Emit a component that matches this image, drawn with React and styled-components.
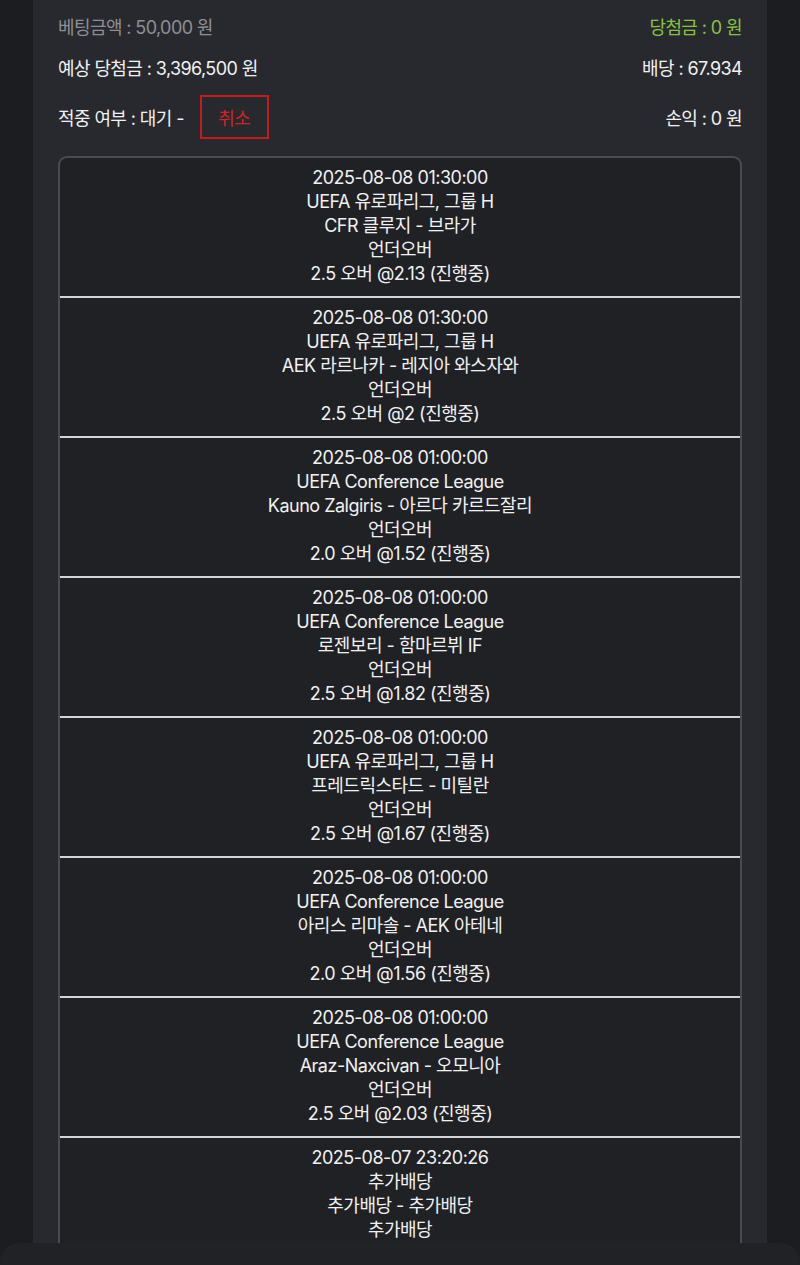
import React from "react";
import styled, { createGlobalStyle } from "styled-components";

const bets = [
    { time: "2025-08-08 01:30:00", league: "UEFA 유로파리그, 그룹 H", match: "CFR 클루지 - 브라가", market: "언더오버", pick: "2.5 오버 @2.13 (진행중)" },
    { time: "2025-08-08 01:30:00", league: "UEFA 유로파리그, 그룹 H", match: "AEK 라르나카 - 레지아 와스자와", market: "언더오버", pick: "2.5 오버 @2 (진행중)" },
    { time: "2025-08-08 01:00:00", league: "UEFA Conference League", match: "Kauno Zalgiris - 아르다 카르드잘리", market: "언더오버", pick: "2.0 오버 @1.52 (진행중)" },
    { time: "2025-08-08 01:00:00", league: "UEFA Conference League", match: "로젠보리 - 함마르뷔 IF", market: "언더오버", pick: "2.5 오버 @1.82 (진행중)" },
    { time: "2025-08-08 01:00:00", league: "UEFA 유로파리그, 그룹 H", match: "프레드릭스타드 - 미틸란", market: "언더오버", pick: "2.5 오버 @1.67 (진행중)" },
    { time: "2025-08-08 01:00:00", league: "UEFA Conference League", match: "아리스 리마솔 - AEK 아테네", market: "언더오버", pick: "2.0 오버 @1.56 (진행중)" },
    { time: "2025-08-08 01:00:00", league: "UEFA Conference League", match: "Araz-Naxcivan - 오모니아", market: "언더오버", pick: "2.5 오버 @2.03 (진행중)" },
    { time: "2025-08-07 23:20:26", league: "추가배당", match: "추가배당 - 추가배당", market: "추가배당", pick: "" },
];

const App = () => {
    return (
        <React.Fragment>
            <GlobalStyle />
            <Screen>
                <Panel>
                    <InfoRow $first>
                        <InfoText $tone="muted">베팅금액 : 50,000 원</InfoText>
                        <InfoText $tone="green">당첨금 : 0 원</InfoText>
                    </InfoRow>
                    <InfoRow>
                        <InfoText>예상 당첨금 : 3,396,500 원</InfoText>
                        <InfoText>배당 : 67.934</InfoText>
                    </InfoRow>
                    <StatusRow>
                        <StatusLeft>
                            <InfoText>적중 여부 : 대기 -</InfoText>
                            <CancelButton>취소</CancelButton>
                        </StatusLeft>
                        <InfoText>손익 : 0 원</InfoText>
                    </StatusRow>
                    <BetCard>
                        {bets.map((bet, i) => (
                            <BetRow key={i}>
                                <Line>{bet.time}</Line>
                                <Line>{bet.league}</Line>
                                <Line>{bet.match}</Line>
                                <Line>{bet.market}</Line>
                                <Line>{bet.pick}</Line>
                            </BetRow>
                        ))}
                    </BetCard>
                </Panel>
            </Screen>
            <BottomSheet />
        </React.Fragment>
    );
};

const GlobalStyle = createGlobalStyle`
    html, body {
        margin: 0;
        padding: 0;
        background-color: #1c1d21;
        font-family: Inter, "Noto Sans CJK KR", sans-serif;
    }
`;

const Screen = styled.div`
    height: 1243px;
    overflow: hidden;
    padding: 0 33px;
    background-color: #1c1d21;
`;

const Panel = styled.div`
    height: 100%;
    background-color: #28292e;
    padding: 0 25px;
    box-sizing: border-box;
    display: flex;
    flex-direction: column;
`;

const InfoRow = styled.div`
    display: flex;
    align-items: center;
    justify-content: space-between;
    height: ${({ $first }) => ($first ? "40px" : "42px")};
    padding-top: ${({ $first }) => ($first ? "6px" : "0")};
    flex-shrink: 0;
`;

const StatusRow = styled.div`
    display: flex;
    align-items: center;
    justify-content: space-between;
    height: 58px;
    margin-bottom: 10px;
    flex-shrink: 0;
`;

const StatusLeft = styled.div`
    display: flex;
    align-items: center;
    gap: 16px;
`;

const toneColor = {
    muted: "#8e8f94",
    green: "#86c440",
    default: "#f1f1f3",
};

const InfoText = styled.span`
    font-size: 18px;
    letter-spacing: -0.6px;
    color: ${({ $tone }) => toneColor[$tone] || toneColor.default};
`;

const CancelButton = styled.button`
    width: 69px;
    height: 44px;
    background: transparent;
    border: 2px solid #c21d1d;
    color: #d22424;
    font-family: inherit;
    font-size: 18px;
    letter-spacing: -0.5px;
    padding: 0;
`;

const BetCard = styled.div`
    flex-shrink: 0;
    background-color: #202125;
    border: 2px solid #4a4b51;
    border-bottom: none;
    border-radius: 9px 9px 0 0;
    overflow: hidden;
`;

const BetRow = styled.div`
    display: flex;
    flex-direction: column;
    align-items: center;
    height: 140px;
    padding-top: 8px;
    box-sizing: border-box;
    border-bottom: 2px solid #d4d4d6;
    &:last-child {
        border-bottom: none;
    }
`;

const Line = styled.div`
    height: 24px;
    line-height: 24px;
    font-size: 18px;
    letter-spacing: -0.5px;
    color: #f1f1f3;
    white-space: nowrap;
`;

const BottomSheet = styled.div`
    height: 22px;
    background-color: #212226;
    border-radius: 20px 20px 0 0;
`;

export default App;
